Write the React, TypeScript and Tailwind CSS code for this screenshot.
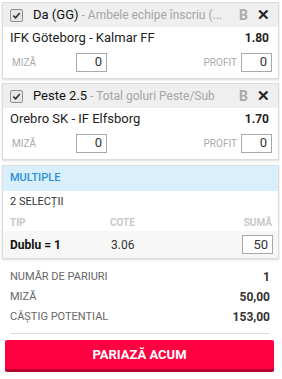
const font = { fontFamily: "Roboto, 'Liberation Sans', sans-serif" };

function Check() {
  return (
    <span className="w-[13px] h-[13px] border border-[#8f8f8f] bg-[#e6e6e6] rounded-[2px] flex items-center justify-center shrink-0">
      <svg width="9" height="9" viewBox="0 0 10 10">
        <path d="M1.5 5.2 L4 7.6 L8.6 2.2" stroke="#333" strokeWidth="1.8" fill="none" />
      </svg>
    </span>
  );
}

function Box({ value }: { value: string }) {
  return (
    <div className="w-[31px] h-[19px] border border-[#a9a9a9] bg-white text-[13px] text-[#333] flex items-center justify-end pr-[4px]">
      {value}
    </div>
  );
}

function Selection({ pick, market, match, odd }: { pick: string; market: string; match: string; odd: string }) {
  return (
    <div className="ml-[2px] w-[277px] border border-[#dcdcdc] bg-white shadow-[0_1px_2px_rgba(0,0,0,0.15)]">
      <div className="h-[24px] bg-[#efefef] flex items-center pl-[7px] pr-[8px]">
        <Check />
        <div className="ml-[10px] text-[12px] whitespace-nowrap">
          <span className="text-[13px] text-[#111]">{pick}</span>
          <span className="text-[#a6a6a6]"> - {market}</span>
        </div>
        <span className="ml-auto text-[14px] font-bold text-[#aaa]">B</span>
        <span className="ml-[9px] text-[15px] font-bold text-[#222] leading-none">✕</span>
      </div>
      <div className="h-[22px] flex items-center justify-between pl-[7px] pr-[9px] text-[13px] text-[#222]">
        <span>{match}</span>
        <span className="font-bold text-[12px]">{odd}</span>
      </div>
      <div className="h-[29px] flex items-center pl-[9px] pr-[6px] pb-[3px]">
        <span className="text-[10px] text-[#aaa] w-[64px]">MIZĂ</span>
        <Box value="0" />
        <span className="ml-auto mr-[4px] text-[10px] text-[#aaa]">PROFIT</span>
        <Box value="0" />
      </div>
    </div>
  );
}

export default function App() {
  return (
    <div className="w-[282px] h-[379px] bg-white pt-[2px]" style={font}>
      <Selection pick="Da (GG)" market="Ambele echipe înscriu (..." match="IFK Göteborg - Kalmar FF" odd="1.80" />
      <div className="h-[4px]" />
      <Selection pick="Peste 2.5" market="Total goluri Peste/Sub" match="Orebro SK - IF Elfsborg" odd="1.70" />
      <div className="h-[5px]" />
      <div className="ml-[2px] w-[277px] border border-[#dcdcdc] bg-white shadow-[0_1px_2px_rgba(0,0,0,0.15)]">
        <div className="h-[25px] bg-[#d9effc] flex items-center pl-[7px] text-[11px] font-medium text-[#2a8fd6]">MULTIPLE</div>
        <div className="h-[22px] flex items-center pl-[7px] text-[11px] text-[#333]">2 SELECȚII</div>
        <div className="h-[18px] flex items-end pl-[7px] pr-[6px] pb-[1px] text-[10px] font-bold text-[#c8c8c8]">
          <span className="w-[100px]">TIP</span>
          <span>COTE</span>
          <span className="ml-auto">SUMĂ</span>
        </div>
        <div className="h-[27px] bg-[#f7f7f7] flex items-center pl-[7px] pr-[5px]">
          <span className="w-[101px] text-[12px] font-bold text-[#111]">Dublu = 1</span>
          <span className="text-[12px] text-[#333]">3.06</span>
          <div className="ml-auto">
            <Box value="50" />
          </div>
        </div>
      </div>
      <div className="pl-[10px] pr-[12px] pt-[11px]">
        <div className="flex flex-col gap-[6px] text-[11px] text-[#666]">
          <div className="flex justify-between items-center h-[14px]">
            <span>NUMĂR DE PARIURI</span>
            <span className="font-bold text-[12px] text-[#333]">1</span>
          </div>
          <div className="flex justify-between items-center h-[14px]">
            <span>MIZĂ</span>
            <span className="font-bold text-[12px] text-[#333]">50,00</span>
          </div>
          <div className="flex justify-between items-center h-[14px]">
            <span>CÂȘTIG POTENTIAL</span>
            <span className="font-bold text-[12px] text-[#333]">153,00</span>
          </div>
        </div>
        <div className="mt-[9px] h-px bg-[#dcdcdc]" />
      </div>
      <div className="px-[5px] pt-[6px]">
        <button className="w-[269px] h-[32px] bg-[#ff0040] border-b-[3px] border-[#b5002e] rounded-[2px] text-white text-[13px] font-bold">
          PARIAZĂ ACUM
        </button>
      </div>
    </div>
  );
}
